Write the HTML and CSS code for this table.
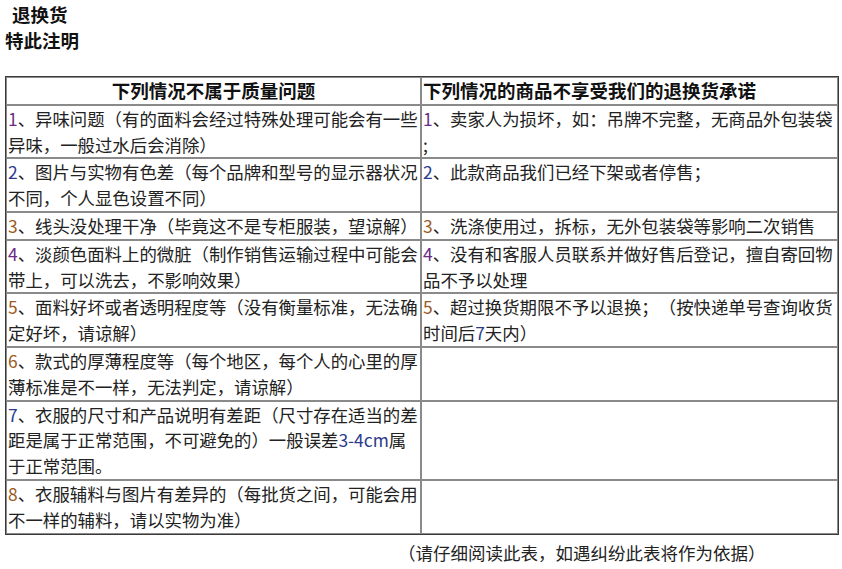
FILE: index.html
```html
<!DOCTYPE html>
<html lang="zh-CN">
<head>
<meta charset="utf-8">
<title>退换货</title>
<link rel="stylesheet" href="styles.css">
</head>
<body>
<div class="titles">
  <div class="title title-indent">退换货</div>
  <div class="title">特此注明</div>
</div>
<table class="policy">
  <colgroup><col class="col-left"><col class="col-right"></colgroup>
  <tr class="head">
    <th class="center">下列情况不属于质量问题</th>
    <th>下列情况的商品不享受我们的退换货承诺</th>
  </tr>
  <tr>
    <td><span class="num purple">1</span>、异味问题（有的面料会经过特殊处理可能会有一些<br>异味，一般过水后会消除）</td>
    <td><span class="num purple">1</span>、卖家人为损坏，如：吊牌不完整，无商品外包装袋<br>;</td>
  </tr>
  <tr>
    <td><span class="num blue">2</span>、图片与实物有色差（每个品牌和型号的显示器状况<br>不同，个人显色设置不同）</td>
    <td><span class="num blue">2</span>、此款商品我们已经下架或者停售；<br>&nbsp;</td>
  </tr>
  <tr>
    <td><span class="num brown">3</span>、线头没处理干净（毕竟这不是专柜服装，望谅解）</td>
    <td><span class="num brown">3</span>、洗涤使用过，拆标，无外包装袋等影响二次销售</td>
  </tr>
  <tr>
    <td><span class="num purple">4</span>、淡颜色面料上的微脏（制作销售运输过程中可能会<br>带上，可以洗去，不影响效果）</td>
    <td><span class="num purple">4</span>、没有和客服人员联系并做好售后登记，擅自寄回物<br>品不予以处理</td>
  </tr>
  <tr>
    <td><span class="num brown">5</span>、面料好坏或者透明程度等（没有衡量标准，无法确<br>定好坏，请谅解）</td>
    <td><span class="num brown">5</span>、超过换货期限不予以退换；（按快递单号查询收货<br>时间后<span class="num blue">7</span>天内）</td>
  </tr>
  <tr>
    <td><span class="num brown">6</span>、款式的厚薄程度等（每个地区，每个人的心里的厚<br>薄标准是不一样，无法判定，请谅解）</td>
    <td></td>
  </tr>
  <tr>
    <td><span class="num blue">7</span>、衣服的尺寸和产品说明有差距（尺寸存在适当的差<br>距是属于正常范围，不可避免的）一般误差<span class="num blue">3-4cm</span>属<br>于正常范围。</td>
    <td></td>
  </tr>
  <tr>
    <td><span class="num brown">8</span>、衣服辅料与图片有差异的（每批货之间，可能会用<br>不一样的辅料，请以实物为准）</td>
    <td></td>
  </tr>
</table>
<div class="note">（请仔细阅读此表，如遇纠纷此表将作为依据）</div>
</body>
</html>
```
FILE: styles.css
```css
html, body {
  background: #ffffff;
}
body {
  margin: 0 0 0 5px;
  font-family: "Noto Sans CJK SC", "Liberation Sans", sans-serif;
  color: #222222;
  text-spacing-trim: space-all;
}
.titles {
  padding-top: 1px;
}
.title {
  font-size: 18.5px;
  font-weight: bold;
  line-height: 26px;
  color: #111111;
}
.title-indent {
  padding-left: 7px;
}
.policy {
  margin-top: 23px;
  width: 832px;
  table-layout: fixed;
  border-collapse: separate;
  border-spacing: 0;
  border: 1px solid #3a3a3a;
}
.col-left {
  width: 415px;
}
.col-right {
  width: 417px;
}
.policy th,
.policy td {
  border: 1px solid #8a8a8a;
  padding: 0 1px;
  font-size: 17.4px;
  line-height: 25.8px;
  height: 25.8px;
  text-align: left;
  vertical-align: top;
  white-space: nowrap;
  overflow: hidden;
}
.policy th {
  font-size: 18.5px;
  font-weight: bold;
  color: #111111;
}
.policy th.center {
  text-align: center;
}
.num {
  line-height: 1;
}
.purple {
  color: #6a2c86;
}
.blue {
  color: #2c3a8e;
}
.brown {
  color: #9a5a22;
}
.note {
  margin-top: 5px;
  padding-left: 393px;
  font-size: 17.5px;
  line-height: 26px;
  color: #222222;
}
```
